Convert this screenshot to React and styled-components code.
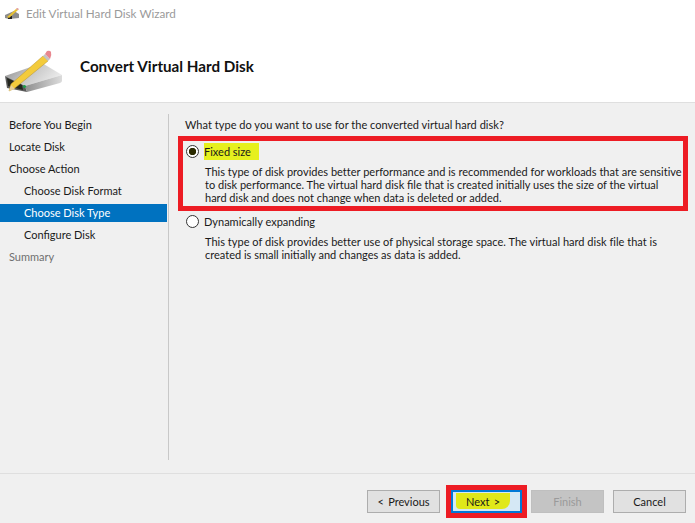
import React from 'react';
import styled, { createGlobalStyle } from 'styled-components';

const steps = [
  { label: 'Before You Begin' },
  { label: 'Locate Disk' },
  { label: 'Choose Action' },
  { label: 'Choose Disk Format', sub: true },
  { label: 'Choose Disk Type', sub: true, active: true },
  { label: 'Configure Disk', sub: true },
  { label: 'Summary', muted: true },
];

function DiskIcon() {
  return (
    <HeaderIcon width="66" height="48" viewBox="0 48 66 48">
      <defs>
        <linearGradient id="diskTop" x1="0" y1="0" x2="1" y2="0.4">
          <stop offset="0" stopColor="#8a8a8a" />
          <stop offset="0.5" stopColor="#c4c4c4" />
          <stop offset="1" stopColor="#e9e9e9" />
        </linearGradient>
        <linearGradient id="diskFront" x1="0" y1="0" x2="1" y2="0">
          <stop offset="0" stopColor="#8e8e8e" />
          <stop offset="1" stopColor="#dcdcdc" />
        </linearGradient>
      </defs>
      <path d="M5 76 L42 63 L62 75 L25 86 Z" fill="url(#diskTop)" />
      <path d="M5 76 L25 86 L27 92 L7 88 Z" fill="#5a5a5a" />
      <path d="M7 78 L22 85 L23 90 L8 86 Z" fill="#23261f" />
      <path d="M25 86 L62 75 L62 81 Q62 82 60 83 L27 92 Z" fill="url(#diskFront)" />
      <circle cx="24.5" cy="86.5" r="1.6" fill="#1f9a4a" />
      <path d="M9 91 L11 84 L43 56 L48 61 L15 88 Z" fill="#f3cb3c" stroke="#b8922a" strokeWidth="0.5" />
      <path d="M9 91 L11 85 L15 89 Z" fill="#e8cf9a" />
      <path d="M43 56 L45 54 L50 59 L48 61 Z" fill="#c4c4c4" />
      <path d="M45 54 L47 51 Q50 50 51 52 Q52 55 50 59 Z" fill="#e8878f" />
    </HeaderIcon>
  );
}

function TitleIcon() {
  return (
    <svg width="15" height="11" viewBox="0 0 15 11">
      <path d="M0 7 L9 3 L14 6 L14 10 L4 11 L0 10 Z" fill="#8c8c8c" />
      <path d="M3 8 L7 8 L7 11 L3 11 Z" fill="#222" />
      <path d="M2 9 L11 1 L13 2 L4 10 Z" fill="#e8c233" />
      <path d="M11 1 L12 0 L14 1 L13 2 Z" fill="#d98a8a" />
    </svg>
  );
}

export default function App() {
  return (
    <Wizard>
      <GlobalStyle />
      <TitleBar>
        <TitleIcon />
        <TitleText>Edit Virtual Hard Disk Wizard</TitleText>
      </TitleBar>
      <Header>
        <DiskIcon />
        <HeaderText>Convert Virtual Hard Disk</HeaderText>
      </Header>
      <Body>
        <Nav>
          {steps.map((s) => (
            <NavItem key={s.label} $sub={s.sub} $active={s.active} $muted={s.muted}>
              {s.label}
            </NavItem>
          ))}
        </Nav>
        <Content>
          <Question>What type do you want to use for the converted virtual hard disk?</Question>
          <Highlighted>
            <RadioRow>
              <Radio $checked />
              <Marked>Fixed size</Marked>
            </RadioRow>
            <Description>
              <Line $track="0.01px">
                This type of disk provides better performance and is recommended for workloads that are sensitive
              </Line>
              <Line>to disk performance. The virtual hard disk file that is created initially uses the size of the virtual</Line>
              <Line>hard disk and does not change when data is deleted or added.</Line>
            </Description>
          </Highlighted>
          <Plain>
            <RadioRow>
              <Radio />
              <span>Dynamically expanding</span>
            </RadioRow>
            <Description>
              <Line $track="0.02px">
                This type of disk provides better use of physical storage space. The virtual hard disk file that is
              </Line>
              <Line>created is small initially and changes as data is added.</Line>
            </Description>
          </Plain>
        </Content>
      </Body>
      <Footer>
        <Button>&lt; Previous</Button>
        <NextFrame>
          <NextButton>
            <NextMark>Next &gt;</NextMark>
          </NextButton>
        </NextFrame>
        <Button disabled>Finish</Button>
        <CancelButton>Cancel</CancelButton>
      </Footer>
    </Wizard>
  );
}

const GlobalStyle = createGlobalStyle`
  html, body {
    margin: 0;
    padding: 0;
    background: #f0f0f0;
  }
  * {
    box-sizing: border-box;
  }
`;

const Wizard = styled.div`
  width: 695px;
  height: 523px;
  display: flex;
  flex-direction: column;
  overflow: hidden;
  background: #f0f0f0;
  color: #1a1a1a;
  font-family: 'Lato', 'Open Sans', sans-serif;
  font-size: 11px;
`;

const TitleBar = styled.div`
  height: 27px;
  flex: none;
  display: flex;
  align-items: center;
  gap: 6px;
  padding: 0 0 1px 5px;
  background: #fff;
`;

const TitleText = styled.span`
  font-size: 11.7px;
  color: #9a9a9a;
`;

const Header = styled.div`
  height: 76px;
  flex: none;
  display: flex;
  align-items: center;
  gap: 14px;
  padding-top: 3px;
  background: #fff;
  border-bottom: 1px solid #dfdfdf;
`;

const HeaderIcon = styled.svg`
  flex: none;
  margin-top: 12px;
`;

const HeaderText = styled.h1`
  margin: 0;
  font-size: 15.2px;
  font-weight: 700;
  color: #111;
`;

const Body = styled.div`
  flex: 1;
  display: flex;
  padding-top: 11px;
  padding-bottom: 13px;
`;

const Nav = styled.div`
  width: 169px;
  flex: none;
  border-right: 1px solid #c8c8c8;
`;

const NavItem = styled.div`
  height: 22px;
  display: flex;
  align-items: center;
  padding: 0 0 1px ${(p) => (p.$sub ? '24px' : '9px')};
  margin-right: 1px;
  background: ${(p) => (p.$active ? 'linear-gradient(#f0f0f0 2px, #0072c0 2px, #0072c0 20px, #f0f0f0 20px)' : 'none')};
  color: ${(p) => (p.$active ? '#fff' : p.$muted ? '#6f6f6f' : '#1a1a1a')};
`;

const Content = styled.div`
  flex: 1;
  padding: 3px 7px 0 9px;
`;

const Question = styled.div`
  height: 16px;
  line-height: 16px;
  padding-left: 7px;
  margin-bottom: 3px;
  letter-spacing: 0.03px;
`;

const Highlighted = styled.div`
  height: 75px;
  width: 510px;
  border: 5px solid #ed1c24;
  padding: 2px 0 0 3px;
`;

const Plain = styled.div`
  padding: 2px 0 0 8px;
`;

const RadioRow = styled.div`
  height: 17px;
  display: flex;
  align-items: center;
  gap: 5px;
`;

const Radio = styled.span`
  width: 13px;
  height: 13px;
  flex: none;
  border-radius: 50%;
  border: 1px solid #333;
  background: ${(p) => (p.$checked ? 'radial-gradient(circle, #2a2a00 0 3.4px, #fff 4px)' : '#fff')};
`;

const Marked = styled.span`
  background: #e6f01e;
  padding: 0 8px 0 0;
  line-height: 17px;
`;

const Description = styled.div`
  margin: 5px 0 0 19px;
  white-space: nowrap;
`;

const Line = styled.div`
  height: 13px;
  line-height: 13px;
  letter-spacing: ${(p) => p.$track || 'normal'};
`;

const Footer = styled.div`
  height: 50px;
  flex: none;
  display: flex;
  align-items: center;
  padding: 6px 0 0 367px;
  border-top: 1px solid #dfdfdf;
`;

const Button = styled.button`
  width: 73px;
  height: 23px;
  flex: none;
  padding: 0;
  border: 1px solid ${(p) => (p.disabled ? '#bfbfbf' : '#adadad')};
  background: ${(p) => (p.disabled ? '#c4c4c4' : '#e1e1e1')};
  color: ${(p) => (p.disabled ? '#9a9a9a' : '#1a1a1a')};
  font: inherit;
  word-spacing: 1.5px;
`;

const CancelButton = styled(Button)`
  margin-left: 9px;
`;

const NextFrame = styled.div`
  width: 81px;
  height: 33px;
  flex: none;
  margin: 0 4px 0 6px;
  border: 5px solid #ed1c24;
`;

const NextButton = styled.div`
  height: 23px;
  padding: 1px 10px 2px 0;
  display: flex;
  background: #d5e8f5;
  border: 2px solid #0078d7;
`;

const NextMark = styled.span`
  flex: 1;
  display: flex;
  align-items: center;
  justify-content: center;
  background: #e0e81a;
  border-radius: 0 0 8px 4px;
  margin-left: 3px;
  word-spacing: 1.5px;
`;
